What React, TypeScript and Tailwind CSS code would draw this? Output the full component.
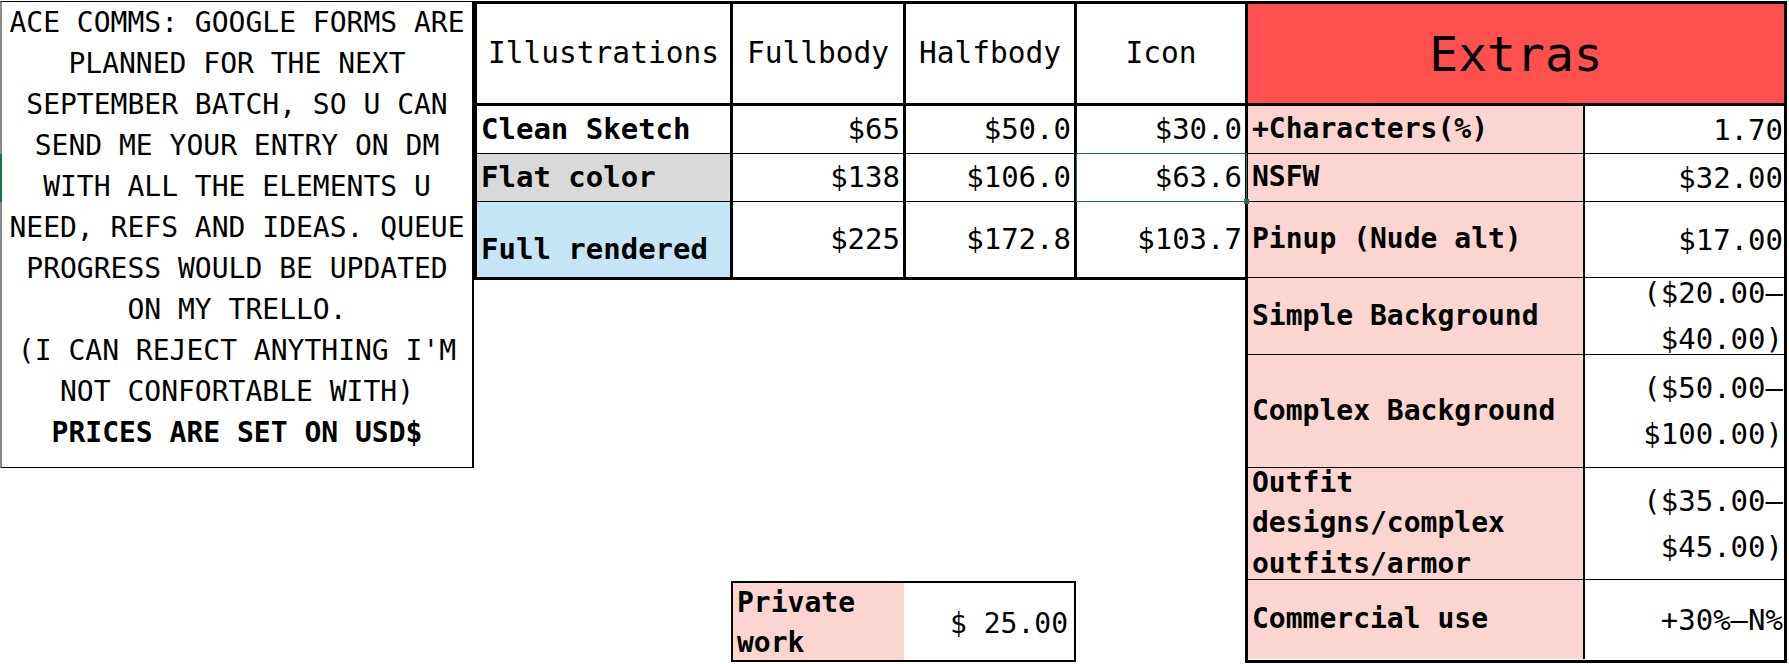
import React from 'react';

const notes = [
  'ACE COMMS: GOOGLE FORMS ARE',
  'PLANNED FOR THE NEXT',
  'SEPTEMBER BATCH, SO U CAN',
  'SEND ME YOUR ENTRY ON DM',
  'WITH ALL THE ELEMENTS U',
  'NEED, REFS AND IDEAS. QUEUE',
  'PROGRESS WOULD BE UPDATED',
  'ON MY TRELLO.',
  "(I CAN REJECT ANYTHING I'M",
  'NOT CONFORTABLE WITH)',
];

const headers = ['Illustrations', 'Fullbody', 'Halfbody', 'Icon'];

const priceRows = [
  {
    label: 'Clean Sketch',
    values: ['$65', '$50.0', '$30.0'],
    height: 'h-[48px]',
    bg: 'bg-white',
    border: 'border-b border-b-black',
    labelAlign: 'items-center',
  },
  {
    label: 'Flat color',
    values: ['$138', '$106.0', '$63.6'],
    height: 'h-[48px]',
    bg: 'bg-[#d9d9d9]',
    border: 'border-b border-b-black',
    labelAlign: 'items-center',
  },
  {
    label: 'Full rendered',
    values: ['$225', '$172.8', '$103.7'],
    height: 'h-[75px]',
    bg: 'bg-[#c3e5f5]',
    border: '',
    labelAlign: 'items-end pb-[6px]',
  },
];

const extras = [
  { label: ['+Characters(%)'], value: ['1.70'], height: 'h-[48px]', border: 'border-b border-b-black' },
  { label: ['NSFW'], value: ['$32.00'], height: 'h-[48px]', border: 'border-b border-b-black' },
  { label: ['Pinup (Nude alt)'], value: ['$17.00'], height: 'h-[76px]', border: 'border-b border-b-black' },
  { label: ['Simple Background'], value: ['($20.00–', '$40.00)'], height: 'h-[77px]', border: 'border-b border-b-black' },
  { label: ['Complex Background'], value: ['($50.00–', '$100.00)'], height: 'h-[113px]', border: 'border-b border-b-black' },
  {
    label: ['Outfit', 'designs/complex', 'outfits/armor'],
    value: ['($35.00–', '$45.00)'],
    height: 'h-[112px]',
    border: 'border-b border-b-black',
  },
  { label: ['Commercial use'], value: ['+30%–N%'], height: 'h-[79px]', border: '' },
];

function PriceTable() {
  return (
    <div className="w-[771px] border-[3px] border-r-0 border-black grid grid-cols-[253px_173px_171px_171px]">
      {headers.map((h, i) => (
        <div
          key={h}
          className={
            'h-[102px] flex items-center justify-center border-b-[3px] border-b-black text-[29.5px] ' +
            (i > 0 ? 'border-l-[3px] border-l-black' : '')
          }
        >
          {h}
        </div>
      ))}
      {priceRows.map((row) => (
        <React.Fragment key={row.label}>
          <div className={`${row.height} ${row.bg} ${row.border} ${row.labelAlign} flex pl-[4px] font-bold text-[29px]`}>
            {row.label}
          </div>
          {row.values.map((v, i) => (
            <div
              key={i}
              className={`${row.height} ${row.border} relative flex items-center justify-end pr-[3px] border-l-[3px] border-l-black text-[29px]`}
            >
              {v}
              {row.label === 'Flat color' && i === 2 && (
                <>
                  <div className="absolute -top-px -bottom-px -left-px -right-[2px] border border-[#217346]" />
                  <div className="absolute -bottom-[3px] -right-[4px] w-[5px] h-[5px] bg-[#217346]" />
                </>
              )}
            </div>
          ))}
        </React.Fragment>
      ))}
    </div>
  );
}

function ExtrasTable() {
  return (
    <div className="w-[542px] h-[662px] border-[3px] border-black grid grid-cols-[335px_201px] content-start">
      <div className="col-span-2 h-[102px] bg-[#ff5050] border-b-[3px] border-b-black flex items-center justify-center text-[48px]">
        Extras
      </div>
      {extras.map((row, idx) => (
        <React.Fragment key={idx}>
          <div
            className={`${row.height} ${row.border} bg-[#fcd5d0] flex flex-col justify-center pl-[4px] font-bold text-[28px] leading-[40.5px] whitespace-nowrap`}
          >
            {row.label.map((l) => (
              <span key={l}>{l}</span>
            ))}
          </div>
          <div
            className={`${row.height} ${row.border} border-l-2 border-l-black flex flex-col justify-center items-end pr-[1px] text-[29px] leading-[46px] whitespace-nowrap`}
          >
            {row.value.map((v) => (
              <span key={v}>{v}</span>
            ))}
          </div>
        </React.Fragment>
      ))}
    </div>
  );
}

export default function App() {
  return (
    <div className="relative w-[1789px] h-[664px] bg-white pt-px flex text-black font-['DejaVu_Sans_Mono',monospace]">
      {/* notes box */}
      <div className="w-[474px] shrink-0">
        <div className="h-[467px] border border-black border-l-2 border-l-[#8a8a8a] border-r-2 flex flex-col items-center text-[28px] leading-[41px] whitespace-nowrap">
          {notes.map((n) => (
            <span key={n}>{n}</span>
          ))}
          <span className="font-bold">PRICES ARE SET ON USD$</span>
        </div>
      </div>

      {/* main prices */}
      <div className="w-[771px] shrink-0 h-[662px] flex flex-col justify-between">
        <PriceTable />
        <div className="ml-[257px] w-[345px] h-[81px] border-2 border-black flex mb-[1px]">
          <div className="w-[171px] bg-[#fcd5d0] flex flex-col justify-center pl-[4px] font-bold text-[28px] leading-[40px] pt-[2px]">
            <span>Private</span>
            <span>work</span>
          </div>
          <div className="flex-1 flex items-center justify-end pr-[6px] pt-[4px] text-[28px]">$ 25.00</div>
        </div>
      </div>

      <ExtrasTable />

      {/* row selection marker on the sheet edge */}
      <div className="absolute left-0 top-[154px] w-[2px] h-[48px] bg-[#1e7145]" />
    </div>
  );
}
